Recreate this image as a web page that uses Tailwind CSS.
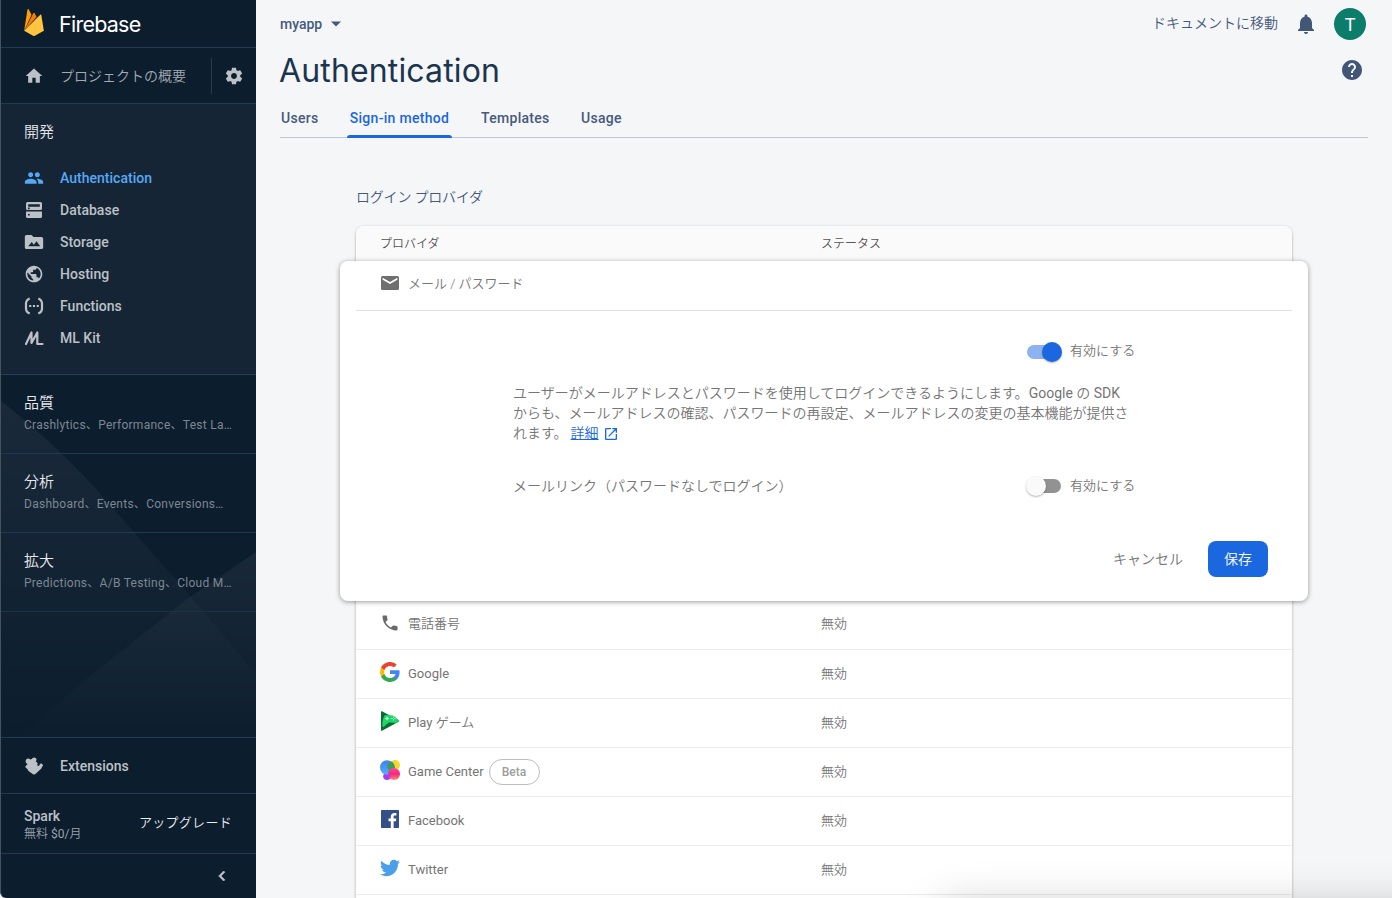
<!DOCTYPE html>
<html lang="ja">
<head>
<meta charset="utf-8">
<title>Authentication - Firebase</title>
<script src="https://cdn.jsdelivr.net/npm/@tailwindcss/browser@4"></script>
</head>
<body class="h-[898px] w-[1392px] overflow-hidden bg-[#f5f6f8] font-['Roboto','Noto_Sans_CJK_JP',sans-serif]">
<div class="relative flex h-[898px] w-[1392px] overflow-hidden">

  <!-- Sidebar -->
  <aside class="relative isolate flex h-full w-64 shrink-0 flex-col overflow-hidden rounded-bl-md border-l border-[#46535f] bg-[#0c1d2e] text-[#bcc1c6]">
    <svg class="absolute top-0 -left-px -z-10" width="256" height="898" viewBox="0 0 256 898">
      <defs>
        <linearGradient id="g1" x1="0" y1="400" x2="0" y2="737" gradientUnits="userSpaceOnUse"><stop offset="0" stop-color="#fff" stop-opacity=".055"/><stop offset="1" stop-color="#fff" stop-opacity="0"/></linearGradient>
        <linearGradient id="g2" x1="0" y1="552" x2="0" y2="745" gradientUnits="userSpaceOnUse"><stop offset="0" stop-color="#fff" stop-opacity=".05"/><stop offset="1" stop-color="#fff" stop-opacity="0"/></linearGradient>
      </defs>
      <path d="M0 400Q60 448 102 496L190 596 256 674V737H0z" fill="url(#g1)"/>
      <path d="M256 552L190 597 90 676 18 737H256z" fill="url(#g2)"/>
    </svg>

    <div class="flex h-12 shrink-0 items-center border-b border-[#213b55] pl-[23px]">
      <svg class="-mt-0.5 h-[27px] w-5" viewBox="3.2 0 17.6 24" preserveAspectRatio="none">
        <path fill="#ffa000" d="M3.316 19.365L6.255.461A.542.542 0 0 1 7.27.288l2.543 4.771z"/>
        <path fill="#f57c00" d="M14.3 7.147l-1.82-3.482a.542.542 0 0 0-.96 0L3.316 19.365z"/>
        <path fill="#ffc540" d="M20.684 19.364l-2.25-14a.54.54 0 0 0-.919-.295L3.316 19.365l7.856 4.427a1.621 1.621 0 0 0 1.588 0z"/>
      </svg>
      <span class="ml-[15px] font-['Inter'] text-[21.5px] leading-6 tracking-[-0.75px] text-white">Firebase</span>
    </div>

    <div class="flex h-14 shrink-0 items-center border-b border-[#213b55] pl-[23px]">
      <svg class="size-5" viewBox="0 0 24 24" fill="currentColor"><path d="M10 20v-6h4v6h5v-8h3L12 3 2 12h3v8z"/></svg>
      <span class="ml-4 w-[151px] text-sm font-[350] text-[#a3aab1]">プロジェクトの概要</span>
      <span class="h-9 w-px bg-[#283b4e]"></span>
      <svg class="ml-3 size-5" viewBox="0 0 24 24" fill="currentColor"><path d="M19.43 12.98c.04-.32.07-.64.07-.98s-.03-.66-.07-.98l2.11-1.65c.19-.15.24-.42.12-.64l-2-3.46c-.12-.22-.39-.3-.61-.22l-2.49 1c-.52-.4-1.08-.73-1.69-.98l-.38-2.65C14.46 2.18 14.25 2 14 2h-4c-.25 0-.46.18-.49.42l-.38 2.65c-.61.25-1.17.59-1.69.98l-2.49-1c-.23-.09-.49 0-.61.22l-2 3.46c-.13.22-.07.49.12.64l2.11 1.65c-.04.32-.07.65-.07.98s.03.66.07.98l-2.11 1.65c-.19.15-.24.42-.12.64l2 3.46c.12.22.39.3.61.22l2.49-1c.52.4 1.08.73 1.69.98l.38 2.65c.03.24.24.42.49.42h4c.25 0 .46-.18.49-.42l.38-2.65c.61-.25 1.17-.59 1.69-.98l2.49 1c.23.09.49 0 .61-.22l2-3.46c.12-.22.07-.49-.12-.64l-2.11-1.65zM12 15.5c-1.93 0-3.5-1.57-3.5-3.5s1.57-3.5 3.5-3.5 3.5 1.57 3.5 3.5-1.57 3.5-3.5 3.5z"/></svg>
    </div>

    <nav class="flex h-[271px] shrink-0 flex-col border-b border-[#213f5c] bg-[#152536] pl-[23px]">
      <h2 class="mb-[18px] h-10 pt-[17px] text-[15px] leading-[22px] font-[350] text-[#e4e6e9]">開発</h2>
      <a class="flex h-8 items-center gap-4 text-[#56a8f5]"><svg class="size-5" viewBox="0 0 24 24" fill="currentColor"><path d="M16 11c1.66 0 2.99-1.34 2.99-3S17.66 5 16 5s-3 1.34-3 3 1.34 3 3 3zm-8 0c1.66 0 2.99-1.34 2.99-3S9.66 5 8 5 5 6.34 5 8s1.34 3 3 3zm0 2c-2.33 0-7 1.17-7 3.5V19h14v-2.500c0-2.330-4.670-3.500-7-3.500zm8 0c-.29 0-.62.02-.97.05 1.160.84 1.970 1.970 1.970 3.450V19h6v-2.500c0-2.330-4.670-3.500-7-3.500z"/></svg><span class="text-sm font-medium tracking-[0.02px]">Authentication</span></a>
      <a class="flex h-8 items-center gap-4"><svg class="size-5" viewBox="0 0 20 20" fill="currentColor" fill-rule="evenodd"><path d="M3.500 2h13A1.500 1.500 0 0 1 18 3.500v5A1.500 1.500 0 0 1 16.500 10h-13A1.500 1.500 0 0 1 2 8.500v-5A1.500 1.500 0 0 1 3.500 2zM4.200 4.200v2.600h11.600V4.200zM2 11.500h16v5a1.500 1.500 0 0 1-1.500 1.500h-13A1.500 1.500 0 0 1 2 16.500zM4 13.900v1.700h1.700v-1.700z"/><path d="M4 7.500h1.700v1.700H4z" fill="#152536"/></svg><span class="text-sm font-medium tracking-[0.02px]">Database</span></a>
      <a class="flex h-8 items-center gap-4"><svg class="size-5" viewBox="0 0 24 24" fill="currentColor" fill-rule="evenodd"><path d="M3 3.500h6l2.400 2.500h9.600a2 2 0 0 1 2 2v10.500a2 2 0 0 1-2 2H3a2 2 0 0 1-2-2v-13a2 2 0 0 1 2-2zM5 17h14.500l-4.500-6-3.200 4.200L9.300 12z"/></svg><span class="text-sm font-medium tracking-[0.02px]">Storage</span></a>
      <a class="flex h-8 items-center gap-4"><svg class="size-5" viewBox="0 0 24 24" fill="currentColor"><path d="M12 2C6.480 2 2 6.480 2 12s4.480 10 10 10 10-4.480 10-10S17.520 2 12 2zm-1 17.930c-3.950-.49-7-3.850-7-7.930 0-.62.08-1.210.21-1.790L9 15v1c0 1.100.9 2 2 2v1.930zm6.900-2.540c-.26-.81-1-1.390-1.900-1.390h-1v-3c0-.55-.45-1-1-1H8v-2h2c.55 0 1-.45 1-1V7h2c1.100 0 2-.9 2-2v-.41c2.930 1.190 5 4.060 5 7.410 0 2.080-.8 3.970-2.100 5.390z"/></svg><span class="text-sm font-medium tracking-[0.02px]">Hosting</span></a>
      <a class="flex h-8 items-center gap-4"><svg class="size-5" viewBox="0 0 20 20" fill="none" stroke="currentColor" stroke-width="2.200"><path d="M5.700 2.400Q2 4 2 7.500V12.500Q2 16 5.700 17.600M14.300 2.400Q18 4 18 7.500V12.500Q18 16 14.300 17.600"/><path d="M5.200 10h2.100M8.950 10h2.100M12.700 10h2.100"/></svg><span class="text-sm font-medium tracking-[0.02px]">Functions</span></a>
      <a class="flex h-8 items-center gap-4"><svg class="size-5" viewBox="0 0 20 20" fill="none" stroke="currentColor" stroke-width="2.200" stroke-linejoin="round" stroke-linecap="round"><path d="M2 16L7.500 4.500V15L13.300 4.500V16H18.500"/></svg><span class="text-sm font-medium tracking-[0.02px]">ML Kit</span></a>
    </nav>

    <section class="flex h-[79px] shrink-0 flex-col border-b border-[#1d3a55] pt-[17px] pl-[23px]">
      <h2 class="text-[15px] leading-[22px] font-[350] text-[#e8eaec]">品質</h2>
      <p class="text-xs leading-[22px] tracking-[0.27px] whitespace-nowrap text-[#7d8792]">Crashlytics、Performance、Test La…</p>
    </section>
    <section class="flex h-[79px] shrink-0 flex-col border-b border-[#1d3a55] pt-[17px] pl-[23px]">
      <h2 class="text-[15px] leading-[22px] font-[350] text-[#e8eaec]">分析</h2>
      <p class="text-xs leading-[22px] tracking-[0.27px] whitespace-nowrap text-[#7d8792]">Dashboard、Events、Conversions…</p>
    </section>
    <section class="flex h-[79px] shrink-0 flex-col border-b border-[#1d3245] pt-[17px] pl-[23px]">
      <h2 class="text-[15px] leading-[22px] font-[350] text-[#e8eaec]">拡大</h2>
      <p class="text-xs leading-[22px] tracking-[0.27px] whitespace-nowrap text-[#7d8792]">Predictions、A/B Testing、Cloud M…</p>
    </section>

    <div class="mt-auto flex h-[57px] shrink-0 items-center gap-4 border-y border-[#213b55] pl-[23px]">
      <svg class="size-5" viewBox="0 0 20 20" fill="currentColor"><path d="M1.200 10.600L3.500 8.200 1.800 6.400Q1 3.200 3.600 2.400Q5.500 2.200 6.300 3.600Q8 3.300 8.600 2Q10.500 .8 12 2.200Q13.200 4 11.800 5.200L13.800 7.400Q12.600 9.500 14 10Q15.400 10.200 16 8L17.200 7.200 19.200 9.200Q17.500 11.500 17.600 12.300L12 17.600Q10 19.300 8 17.600L4.800 15.200Q3 13.500 3.600 13Q1.500 12.500 1.200 10.600z"/></svg>
      <span class="text-sm font-medium tracking-[0.02px]">Extensions</span>
    </div>
    <div class="flex h-[60px] shrink-0 items-center justify-between border-b border-[#213b55] pr-6 pl-[23px]">
      <div class="pt-1"><div class="text-sm leading-[17px] font-medium">Spark</div><div class="pt-px text-xs leading-[17px] text-[#9aa3ab]"><span class="font-[350]">無料</span> $0/<span class="font-[350]">月</span></div></div>
      <span class="pb-0.5 text-[13px] font-[350] tracking-[0.3px] text-[#eceef0]">アップグレード</span>
    </div>
    <div class="flex h-11 shrink-0 items-center justify-end pr-6">
      <svg class="size-5" viewBox="0 0 24 24" fill="currentColor"><path d="M15.410 7.410L14 6l-6 6 6 6 1.410-1.410L10.830 12z" stroke="currentColor" stroke-width=".8"/></svg>
    </div>
  </aside>

  <!-- Content -->
  <main class="flex min-w-0 flex-1 flex-col px-6 text-[#455a7c]">
    <div class="flex h-12 shrink-0 items-center">
      <span class="text-sm font-medium">myapp</span>
      <svg class="ml-1 size-5" viewBox="0 0 20 20" fill="currentColor"><path d="M5 7.500h10L10 12.500z"/></svg>
      <span class="mr-[18px] ml-auto pb-0.5 text-sm font-[350]">ドキュメントに移動</span>
      <svg class="mr-[18px] size-5" viewBox="2 2 20 20" fill="#425776"><path d="M12 22c1.100 0 2-.9 2-2h-4c0 1.100.89 2 2 2zm6-6v-5c0-3.070-1.640-5.640-4.500-6.320V4c0-.83-.67-1.500-1.500-1.500s-1.500.67-1.500 1.500v.68C7.630 5.360 6 7.920 6 11v5l-2 2v1h16v-1l-2-2z"/></svg>
      <span class="mr-0.5 flex size-8 items-center justify-center rounded-full bg-[#0d7d6b] pt-px text-lg text-white">T</span>
    </div>
    <div class="flex h-[44px] shrink-0 items-center justify-between">
      <h1 class="-ml-px pt-0.5 font-['Inter'] text-[32px] leading-10 tracking-[0.15px] text-[#1b3550]">Authentication</h1>
      <svg class="mr-1 size-6" viewBox="0 0 24 24" fill="#425776"><path d="M12 2C6.480 2 2 6.480 2 12s4.480 10 10 10 10-4.480 10-10S17.520 2 12 2zm1 17h-2v-2h2v2zm2.070-7.750l-.9.92C13.450 12.900 13 13.500 13 15h-2v-.5c0-1.100.45-2.100 1.170-2.830l1.240-1.260c.37-.36.59-.86.59-1.410 0-1.100-.9-2-2-2s-2 .9-2 2H8c0-2.210 1.790-4 4-4s4 1.790 4 4c0 .88-.36 1.680-.93 2.250z"/></svg>
    </div>
    <div class="flex h-[46px] shrink-0 items-end border-b border-[#b9c8d6] text-sm font-medium tracking-[0.3px]">
      <a class="-mb-px ml-px flex h-10 w-[66px] items-center">Users</a>
      <a class="relative -mb-px flex h-10 w-[105px] items-center justify-center text-[#1a67e0]">Sign-in method<span class="absolute inset-x-0 bottom-0 h-[3px] rounded-t-[3px] bg-[#1a67e0]"></span></a>
      <a class="-mb-px ml-[29px] flex h-10 w-[100px] items-center">Templates</a>
      <a class="-mb-px flex h-10 items-center">Usage</a>
    </div>

    <section class="mx-auto mt-[46px] w-[936px] shrink-0 text-[13px] text-[#757575]">
      <h2 class="h-[42px] pt-0.5 text-sm leading-[22px] font-[350] tracking-[-0.2px] text-[#455a7c]">ログイン プロバイダ</h2>
      <div class="h-[700px] rounded-lg bg-white shadow-[0_1px_3px_rgba(0,0,0,0.35)]">
        <div class="flex h-[35px] items-center rounded-t-lg bg-[#fafafa] pl-6 text-xs font-[350] text-[#555]"><span class="w-[441px]">プロバイダ</span><span>ステータス</span></div>

        <!-- Expanded provider -->
        <div class="relative -mx-4 h-[340px] rounded-lg bg-white px-4 shadow-[0_1px_5px_rgba(0,0,0,0.4)]">
          <div class="flex h-[50px] items-center border-b border-[#dfe0e1] pb-1 pl-6">
            <svg class="mr-2 -mt-0.5 size-5" viewBox="0 0 20 20" fill="#6f6f6f" fill-rule="evenodd"><path d="M2.500 3h15A1.500 1.500 0 0 1 19 4.500v11a1.500 1.500 0 0 1-1.500 1.500h-15A1.500 1.500 0 0 1 1 15.500v-11A1.500 1.500 0 0 1 2.500 3zM2.600 4.700v2.100L10 11l7.400-4.200V4.700L10 9z"/></svg>
            <span class="font-[350]">メール / パスワード</span>
          </div>
          <div class="mt-[30px] mr-[157px] ml-auto flex h-[22px] w-[109px] items-center">
            <span class="relative mr-2 flex h-[14px] w-9 shrink-0 items-center"><span class="ml-px h-[14px] w-[34px] rounded-full bg-[#8db2f0]"></span><span class="absolute top-[-3px] right-0 size-5 rounded-full bg-[#1a67e0] shadow-[0_1px_2px_rgba(0,0,0,0.3)]"></span></span>
            <span class="shrink-0 pb-0.5 font-[350] whitespace-nowrap">有効にする</span>
          </div>
          <p class="mt-[20px] ml-[157px] text-sm leading-5 whitespace-nowrap"><span class="font-[350]">ユーザーがメールアドレスとパスワードを使用してログインできるようにします。</span>Google <span class="font-[350]">の</span> SDK<br><span class="font-[350]">からも、メールアドレスの確認、パスワードの再設定、メールアドレスの変更の基本機能が提供さ</span><br><span class="font-[350]">れます。</span><a class="ml-[3px] font-[350] text-[#1a67e0] underline">詳細</a><svg class="ml-1 inline size-4 align-[-4px]" viewBox="0 0 24 24" fill="#1a67e0"><path d="M19 19H5V5h7V3H5c-1.110 0-2 .9-2 2v14c0 1.100.89 2 2 2h14c1.100 0 2-.9 2-2v-7h-2v7zM14 3v2h3.590l-9.830 9.830 1.410 1.410L19 6.410V10h2V3h-7z"/></svg></p>
          <div class="mt-[32px] mr-[157px] ml-[157px] flex h-[22px] items-center justify-between">
            <span class="pb-px text-sm font-[350]">メールリンク（パスワードなしでログイン）</span>
            <span class="flex w-[109px] items-center">
              <span class="relative mr-2 flex h-[14px] w-9 shrink-0 items-center"><span class="ml-px h-[14px] w-[34px] rounded-full bg-[#929292]"></span><span class="absolute top-[-3px] left-0 size-5 rounded-full bg-[#fafafa] shadow-[0_1px_2px_rgba(0,0,0,0.3)]"></span></span>
              <span class="shrink-0 font-[350] whitespace-nowrap">有効にする</span>
            </span>
          </div>
          <div class="mt-[44px] flex h-9 items-center justify-end pr-6 text-sm">
            <button class="mr-[25px] font-[350]">キャンセル</button>
            <button class="h-9 w-[60px] rounded-lg bg-[#1a67e0] font-[350] text-white">保存</button>
          </div>
        </div>

        <div class="flex h-[49px] items-center border-b border-[#ebebeb] pb-0.5 pl-6"><span class="flex w-[441px] items-center"><svg class="mr-2 -mt-0.5 size-5" viewBox="0 0 24 24" fill="#6a6a6a"><path d="M6.620 10.790c1.440 2.830 3.760 5.140 6.590 6.590l2.200-2.200c.27-.27.67-.36 1.020-.24 1.120.37 2.330.57 3.570.57.55 0 1 .45 1 1V20c0 .55-.45 1-1 1-9.390 0-17-7.610-17-17 0-.55.45-1 1-1h3.500c.55 0 1 .45 1 1 0 1.250.2 2.450.57 3.570.11.35.03.74-.25 1.020l-2.200 2.200z"/></svg><span class="font-[350]">電話番号</span></span><span class="font-[350]">無効</span></div>

        <div class="flex h-[49px] items-center border-b border-[#ebebeb] pl-6"><span class="flex w-[441px] items-center"><svg class="mr-2 -mt-1 size-5" viewBox="2 2 44 44"><path fill="#4285f4" d="M45.100 24.500c0-1.600-.1-3.100-.4-4.500H24v8.500h11.800c-.5 2.800-2.100 5.100-4.400 6.700v5.500h7.100c4.200-3.900 6.600-9.500 6.600-16.200z"/><path fill="#34a853" d="M24 46c5.900 0 10.900-2 14.600-5.300l-7.100-5.500c-2 1.300-4.500 2.100-7.400 2.100-5.700 0-10.500-3.900-12.300-9.100H4.300v5.700C8 41.100 15.400 46 24 46z"/><path fill="#fbbc05" d="M11.700 28.200c-.4-1.300-.7-2.700-.7-4.200s.3-2.900.7-4.200v-5.700H4.300C2.900 17.100 2 20.400 2 24s.9 6.900 2.300 9.900z"/><path fill="#ea4335" d="M24 10.800c3.200 0 6.100 1.100 8.400 3.300l6.300-6.300C34.900 4.200 29.900 2 24 2 15.400 2 8 6.900 4.300 14.100l7.400 5.700c1.800-5.200 6.600-9 12.300-9z"/></svg><span>Google</span></span><span class="pb-px font-[350]">無効</span></div>

        <div class="flex h-[49px] items-center border-b border-[#ebebeb] pl-6"><span class="flex w-[441px] items-center"><svg class="mr-2 -mt-1 size-5" viewBox="0 0 20 20"><path fill="#0b6b34" d="M1 .4Q1.500 0 2 .3L18.600 9.300Q19.400 10 18.600 10.700L2 19.700Q1.300 20 1 19.500z"/><path fill="#1bd767" d="M4.500 4.500Q7 3.700 9 4.300L13 4.600Q15.200 5.600 18.800 9.500Q19.200 10.200 18.600 10.700Q15.700 12.500 14 11.700L8.500 11.400 4.200 15.600Q2.700 16.500 2.300 14.800Q2.300 8 4.500 4.500z"/><path d="M5.200 7.500h3.600M7 5.700v3.600" stroke="#d8ffe6" stroke-width="1.200"/><path fill="#d8ffe6" d="M13 5.700h1v1h-1zM13 8.300h1v1h-1zM11.500 7h1v1h-1zM14.500 7h1v1h-1z"/></svg><span>Play <span class="font-[350]">ゲーム</span></span></span><span class="pb-px font-[350]">無効</span></div>

        <div class="flex h-[49px] items-center border-b border-[#ebebeb] pl-6"><span class="flex w-[441px] items-center"><svg class="mr-2 -mt-1 size-5" viewBox="0 0 20 20">
          <defs><linearGradient id="gb" x1="0" y1="0" x2="0" y2="1"><stop offset="0" stop-color="#3f7ff0"/><stop offset="1" stop-color="#4fb0fa"/></linearGradient><linearGradient id="gp" x1="0" y1="0" x2="0" y2="1"><stop offset="0" stop-color="#fb4a9a"/><stop offset=".5" stop-color="#f5267f"/><stop offset="1" stop-color="#ff8a6a"/></linearGradient></defs>
          <circle cx="15" cy="5" r="5" fill="#f8d62e"/><circle cx="7" cy="16.200" r="3.800" fill="#a43df2"/><ellipse cx="7" cy="7.500" rx="7" ry="7.300" fill="url(#gb)"/><path fill="#3f9a5a" d="M11.500 1.500Q15.500 4 15 8L10 10.500Q6.500 9 7.500 5Q9 2 11.500 1.500z"/><circle cx="14" cy="13.900" r="6" fill="url(#gp)"/><path d="M8 13.500Q11 12 10.500 18Q8 17 8 13.500z" fill="#e22bc0"/></svg><span>Game Center</span><span class="ml-[5px] flex h-[26px] w-[51px] items-center justify-center rounded-full border border-[#bdbdbd] text-xs font-medium text-[#9e9e9e]">Beta</span></span><span class="pb-px font-[350]">無効</span></div>

        <div class="flex h-[49px] items-center border-b border-[#ebebeb] pl-6"><span class="flex w-[441px] items-center"><svg class="mr-2 -mt-1 size-5" viewBox="0 0 20 20"><rect x="1" y="1" width="18" height="18" rx=".8" fill="#354f88"/><path fill="#fff" d="M10.800 19v-6.700H8.500V9.500h2.300V7.600c0-2.500 1.500-3.700 3.600-3.700.9 0 1.700.1 2 .1v2.500H15c-1.200 0-1.400.6-1.400 1.400v1.600h2.700l-.4 2.800h-2.300V19z"/></svg><span>Facebook</span></span><span class="pb-px font-[350]">無効</span></div>

        <div class="flex h-[49px] items-center border-b border-[#ebebeb] pl-6"><span class="flex w-[441px] items-center"><svg class="mr-2 -mt-1 size-5" viewBox="0 0 24 24" fill="#4a9fe8"><path d="M23.954 4.569c-.885.389-1.830.654-2.825.775 1.014-.611 1.794-1.574 2.163-2.723-.951.555-2.005.959-3.127 1.184-.896-.959-2.173-1.559-3.591-1.559-2.717 0-4.920 2.203-4.920 4.917 0 .39.045.765.127 1.124C7.691 8.094 4.066 6.130 1.640 3.161c-.427.722-.666 1.561-.666 2.475 0 1.710.87 3.213 2.188 4.096-.807-.026-1.566-.248-2.228-.616v.061c0 2.385 1.693 4.374 3.946 4.827-.413.111-.849.171-1.296.171-.314 0-.615-.03-.916-.086.631 1.953 2.445 3.377 4.604 3.417-1.680 1.319-3.809 2.105-6.102 2.105-.39 0-.779-.023-1.170-.067 2.189 1.394 4.768 2.209 7.557 2.209 9.054 0 13.999-7.496 13.999-13.986 0-.209 0-.42-.015-.63.961-.689 1.800-1.560 2.460-2.548z"/></svg><span>Twitter</span></span><span class="pb-px font-[350]">無効</span></div>
      </div>
    </section>
  </main>

  <!-- Soft shadow rising from the window's lower edge -->
  <div class="pointer-events-none absolute top-[912px] left-[948px] h-10 w-[520px] shadow-[0_0_44px_6px_rgba(0,0,0,0.22)]"></div>
</div>
</body>
</html>
